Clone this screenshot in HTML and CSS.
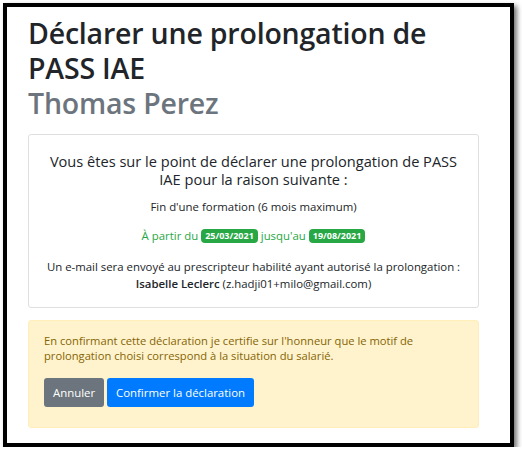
FILE: index.html
```html
<!DOCTYPE html>
<html lang="fr">
<head>
<meta charset="utf-8">
<link rel="stylesheet" href="styles.css">
</head>
<body>
<div class="frame">
  <h1 class="title">Déclarer une prolongation de PASS IAE<br><span class="name">Thomas Perez</span></h1>
  <div class="card">
    <p class="lead">Vous êtes sur le point de déclarer une prolongation de PASS IAE pour la raison suivante :</p>
    <p class="reason">Fin d'une formation (6 mois maximum)</p>
    <p class="dates">À partir du <span class="badge">25/03/2021</span> jusqu'au <span class="badge">19/08/2021</span></p>
    <p class="mail">Un e-mail sera envoyé au prescripteur habilité ayant autorisé la prolongation :<br><b>Isabelle Leclerc</b> (z.hadji01+milo@gmail.com)</p>
  </div>
  <div class="alert">
    <p class="alert-text">En confirmant cette déclaration je certifie sur l'honneur que le motif de prolongation choisi correspond à la situation du salarié.</p>
    <div class="actions">
      <button class="btn btn-secondary">Annuler</button>
      <button class="btn btn-primary">Confirmer la déclaration</button>
    </div>
  </div>
</div>
</body>
</html>
```

FILE: styles.css
```css
* { box-sizing: border-box; }
html, body { margin: 0; padding: 0; background: #fff; }
body { font-family: "Open Sans", "Noto Sans", sans-serif; color: #212529; }
.frame {
  margin: 3px 0 0 3px;
  width: 511px;
  height: 444px;
  border: 4px solid #000;
  box-shadow: 3px 3px 5px rgba(0,0,0,.55);
  padding: 9px 31px 0 21px;
}
.title {
  margin: 0;
  font-size: 28.5px;
  line-height: 35px;
  font-weight: 600;
  color: #212529;
  letter-spacing: -0.2px;
}
.name { color: #6c757d; }
.card {
  margin-top: 13px;
  border: 1px solid #dfdfdf;
  border-radius: 3px;
  padding: 17px 14px 15px;
  text-align: center;
}
.card p { margin: 0; }
.lead {
  font-size: 14.6px;
  font-weight: 500;
  line-height: 18px;
  padding: 0 2px;
}
.reason { font-size: 11.4px; margin-top: 11px !important; line-height: 16px; }
.dates { font-size: 11.4px; color: #28a745; margin-top: 13px !important; line-height: 16px; }
.badge {
  display: inline-block;
  background: #28a745;
  color: #fff;
  font-weight: 700;
  font-size: 9px;
  line-height: 14px;
  padding: 0 4px;
  border-radius: 4px;
  vertical-align: 1px;
}
.mail { font-size: 11.4px; line-height: 17px; margin-top: 14px !important; }
.mail b { font-weight: 600; }
.alert {
  margin-top: 12px;
  background: #fff3cd;
  border: 1px solid #ffeeba;
  border-radius: 3px;
  padding: 12px 15px 20px;
}
.alert-text {
  margin: 0;
  color: #856404;
  font-size: 11.2px;
  line-height: 15px;
}
.actions { display: flex; gap: 3px; margin-top: 15px; }
.btn {
  border: 0;
  border-radius: 3px;
  color: #fff;
  font-family: inherit;
  font-size: 11.4px;
  height: 29px;
  padding: 0 9px;
}
.btn-secondary { background: #6c757d; }
.btn-primary { background: #007bff; }
```
